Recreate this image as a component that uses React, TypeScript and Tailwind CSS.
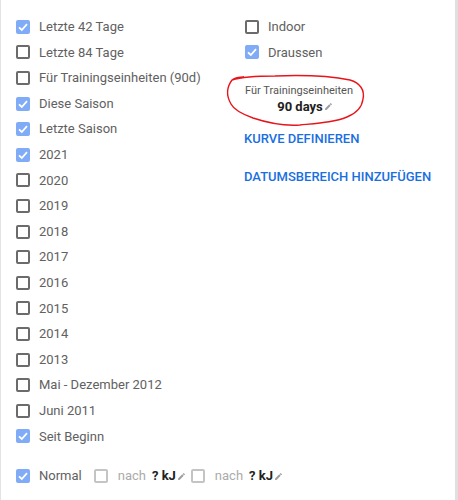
import React from "react";

type Item = { label: string; checked: boolean };

const ranges: Item[] = [
  { label: "Letzte 42 Tage", checked: true },
  { label: "Letzte 84 Tage", checked: false },
  { label: "Für Trainingseinheiten (90d)", checked: false },
  { label: "Diese Saison", checked: true },
  { label: "Letzte Saison", checked: true },
  { label: "2021", checked: true },
  { label: "2020", checked: false },
  { label: "2019", checked: false },
  { label: "2018", checked: false },
  { label: "2017", checked: false },
  { label: "2016", checked: false },
  { label: "2015", checked: false },
  { label: "2014", checked: false },
  { label: "2013", checked: false },
  { label: "Mai - Dezember 2012", checked: false },
  { label: "Juni 2011", checked: false },
  { label: "Seit Beginn", checked: true },
];

function Box({ checked, faded }: { checked: boolean; faded?: boolean }) {
  if (checked) {
    return (
      <span className="w-[14px] h-[14px] rounded-[2px] bg-[#80abf6] flex items-center justify-center shrink-0">
        <svg width="12" height="12" viewBox="0 0 12 12">
          <polyline
            points="2,6.3 4.8,9 10,3.2"
            fill="none"
            stroke="#fff"
            strokeWidth="1.8"
          />
        </svg>
      </span>
    );
  }
  return (
    <span
      className={
        "block w-[14px] h-[14px] rounded-[2px] border-2 shrink-0 " +
        (faded ? "border-[#c4c4c4]" : "border-[#6b6b6b]")
      }
    />
  );
}

function Pencil() {
  return (
    <svg width="9" height="9" viewBox="0 0 24 24" className="ml-[1px]">
      <path
        fill="#9e9e9e"
        d="M3 17.25V21h3.75L17.81 9.94l-3.75-3.75L3 17.25zM20.71 7.04a1 1 0 000-1.41l-2.34-2.34a1 1 0 00-1.41 0l-1.83 1.83 3.75 3.75 1.83-1.83z"
      />
    </svg>
  );
}

function Row({ item }: { item: Item }) {
  return (
    <div className="h-[25.6px] flex items-center gap-[9px]">
      <Box checked={item.checked} />
      <span className="text-[13px] text-[#616161] whitespace-nowrap">{item.label}</span>
    </div>
  );
}

export default function App() {
  return (
    <div
      className="w-[458px] h-[500px] bg-white flex relative overflow-hidden"
      style={{ fontFamily: "Roboto, 'Liberation Sans', sans-serif" }}
    >
      <div className="w-px bg-[#e3e3e3]" />
      <div className="flex-1 flex flex-col">
        <div className="flex pt-[14px]">
          {/* Left column: date ranges */}
          <div className="w-[244px] pl-[15px] flex flex-col">
            {ranges.map((r) => (
              <Row key={r.label} item={r} />
            ))}
          </div>

          {/* Right column */}
          <div className="flex flex-col">
            <Row item={{ label: "Indoor", checked: false }} />
            <Row item={{ label: "Draussen", checked: true }} />
            <div className="mt-[19px] flex flex-col items-center w-[110px]">
              <span className="text-[11px] leading-[14px] text-[#555] whitespace-nowrap -ml-[2px]">
                Für Trainingseinheiten
              </span>
              <span className="flex items-center text-[13px] leading-[17px] font-bold text-[#212121] ml-[10px]">
                90 days
                <Pencil />
              </span>
            </div>
            <span className="mt-[16px] text-[13px] font-medium text-[#1a6fdf] leading-[16px] -ml-[1px]">
              KURVE DEFINIEREN
            </span>
            <span className="mt-[22px] text-[13px] font-medium text-[#1a6fdf] leading-[16px] -ml-[1px] whitespace-nowrap">
              DATUMSBEREICH HINZUFÜGEN
            </span>
          </div>
        </div>

        {/* Bottom row */}
        <div className="mt-[19px] pl-[15px] flex items-center h-[16px] text-[13px]">
          <Box checked />
          <span className="ml-[9px] text-[#616161]">Normal</span>
          <span className="ml-[12px]">
            <Box checked={false} faded />
          </span>
          <span className="ml-[10px] text-[#ababab]">nach</span>
          <span className="ml-[6px] font-bold text-[#212121]">? kJ</span>
          <Pencil />
          <span className="ml-[5px]">
            <Box checked={false} faded />
          </span>
          <span className="ml-[10px] text-[#ababab]">nach</span>
          <span className="ml-[6px] font-bold text-[#212121]">? kJ</span>
          <Pencil />
        </div>
      </div>
      <div className="w-[3px] bg-[#e0e0e0]" />

      {/* hand-drawn annotation */}
      <svg
        className="absolute left-[220px] top-[70px] pointer-events-none"
        width="150"
        height="60"
        viewBox="220 70 150 60"
      >
        <path
          d="M232 80 C245 76 260 76 275 76 C300 75 330 76 350 80 C360 83 365 90 363 99 C362 107 357 113 347 117 C335 122 320 123 300 125 C285 126 268 123 253 118 C242 114 234 110 231 104 C227 97 226 88 232 80 C236 77 240 77 244 77"
          fill="none"
          stroke="#e8141b"
          strokeWidth="1.4"
        />
      </svg>
    </div>
  );
}
